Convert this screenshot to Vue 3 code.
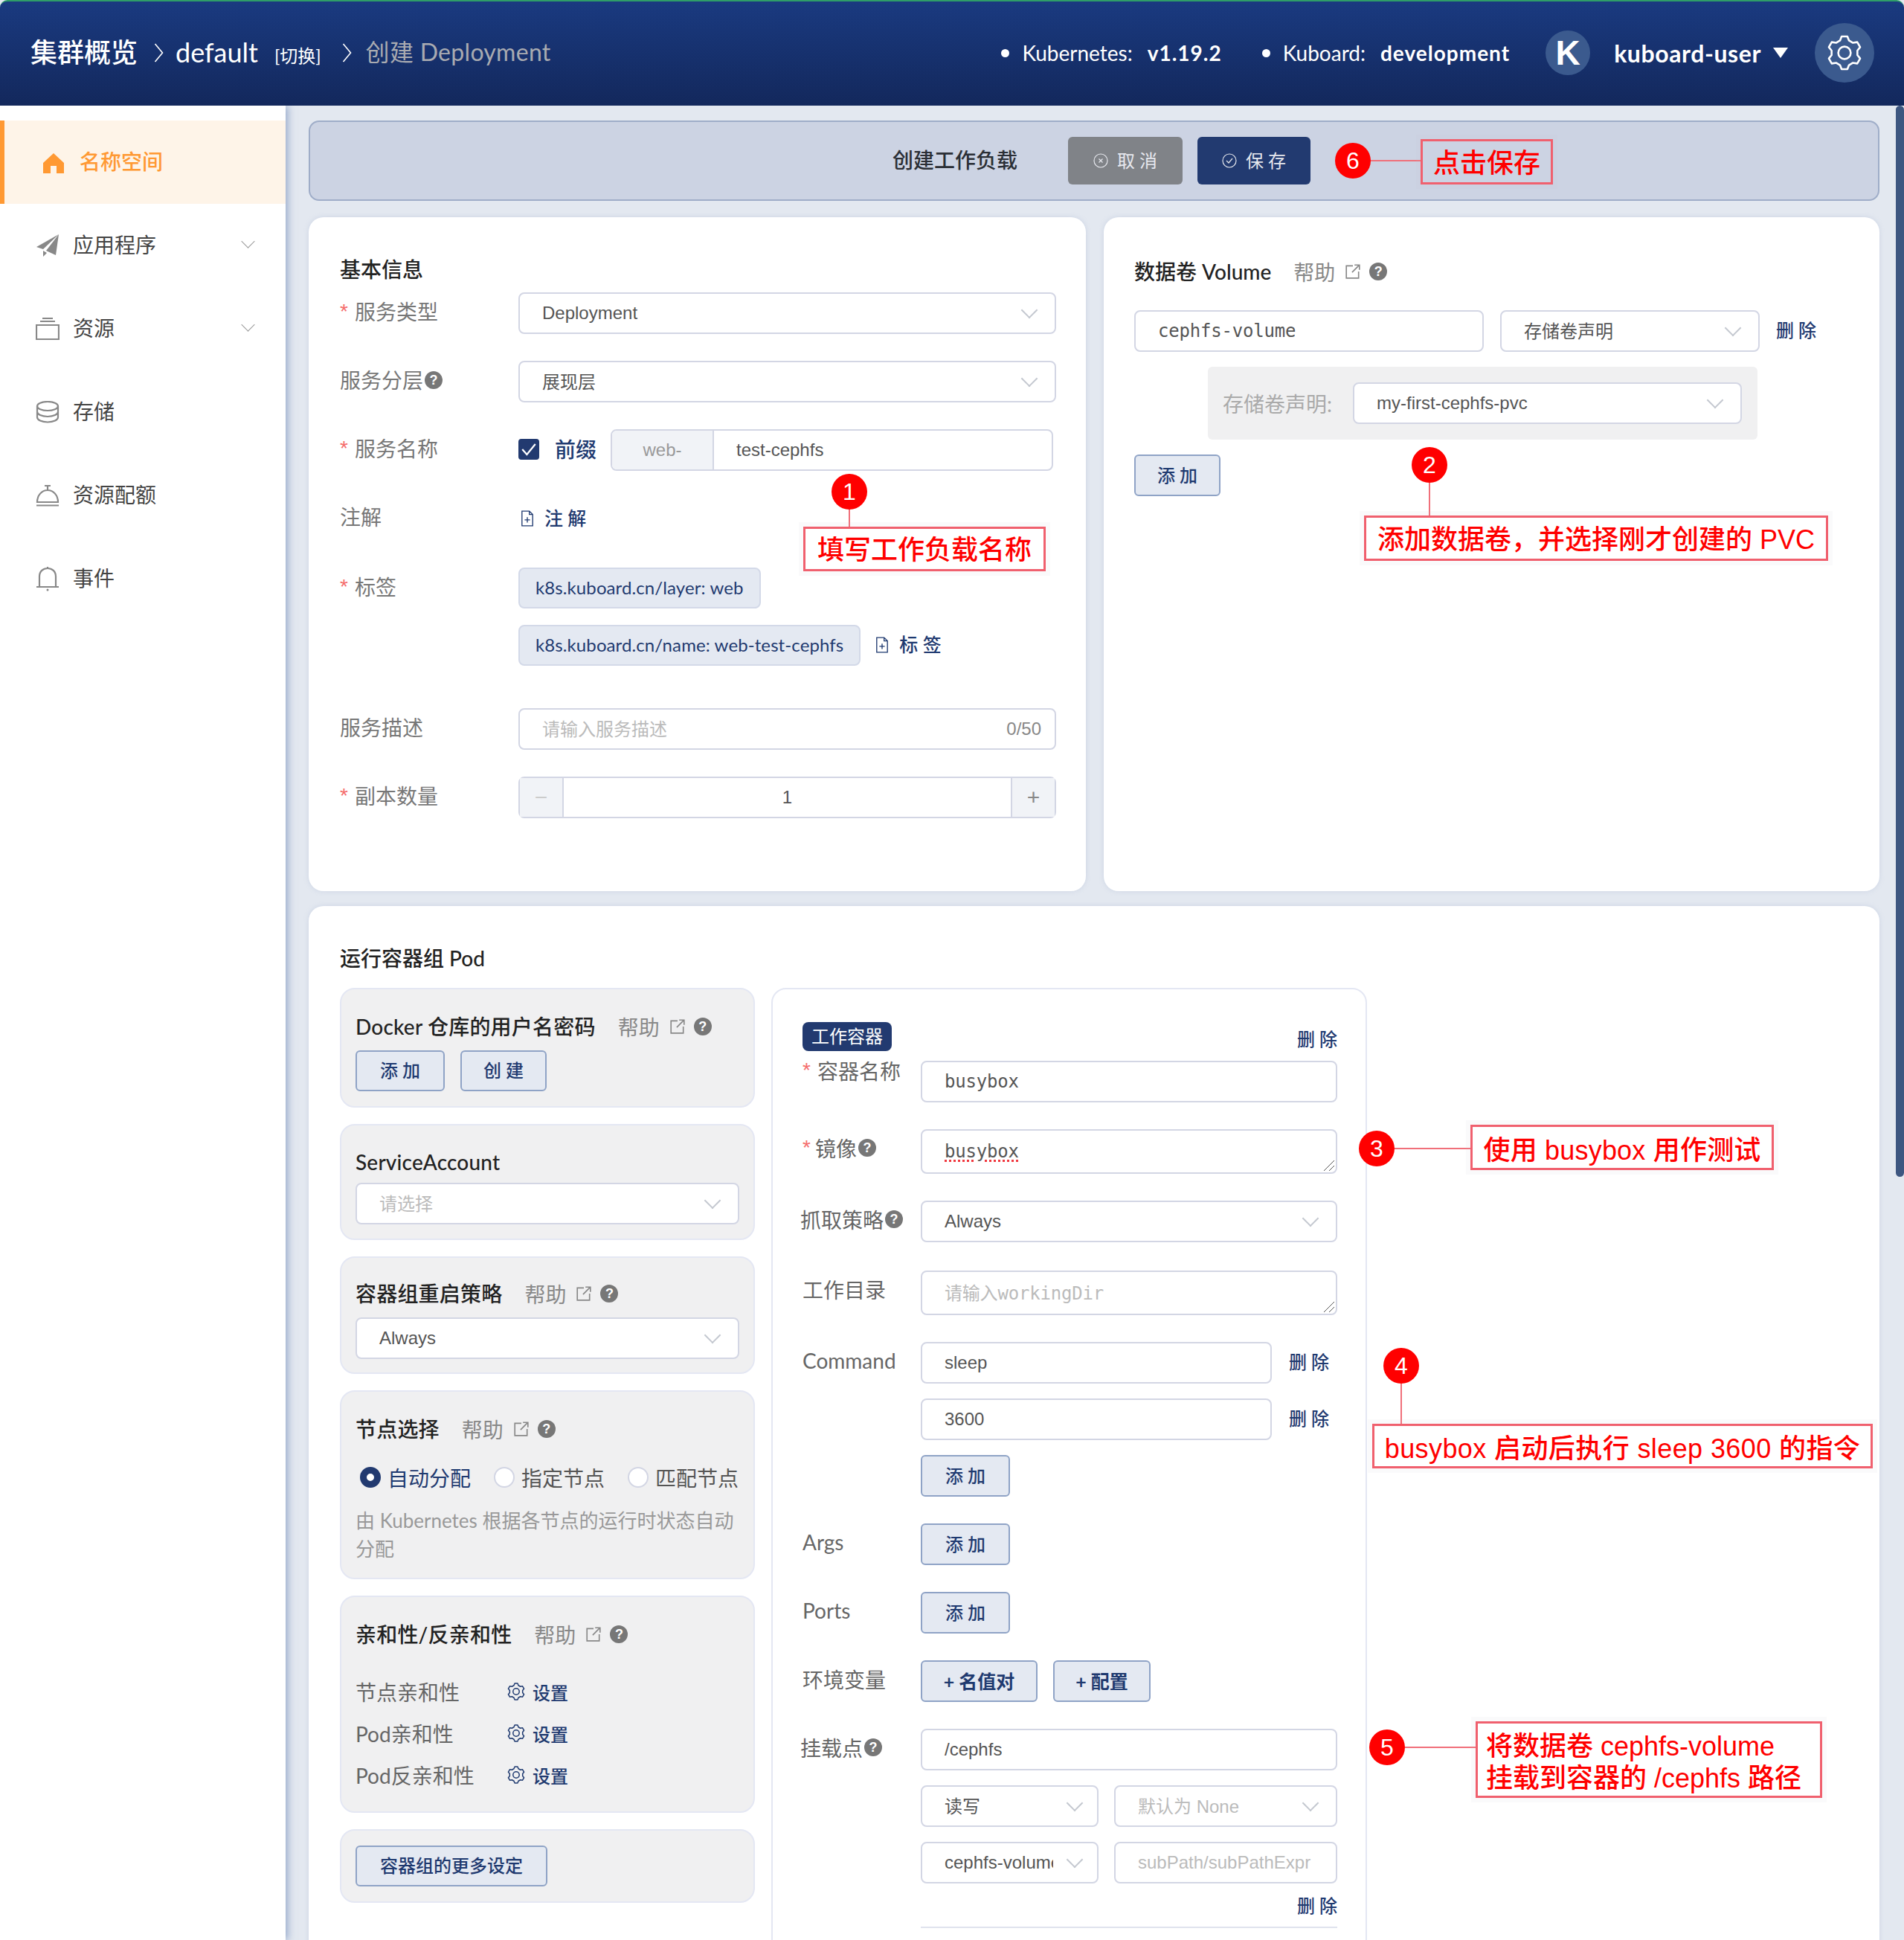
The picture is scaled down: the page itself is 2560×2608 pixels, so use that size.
<template>
  <div class="page">
    <header class="topbar">
      <span class="crumb strong">集群概览</span>
      <svg class="crumb-sep first" viewBox="0 0 12 26"><path d="M1 1l10 12L1 25" /></svg>
      <span class="crumb">default</span>
      <span class="switch">[切换]</span>
      <svg class="crumb-sep second" viewBox="0 0 12 26"><path d="M1 1l10 12L1 25" /></svg>
      <span class="crumb muted">创建 Deployment</span>

      <div class="top-right">
        <span class="meta"><i class="dot"></i>Kubernetes:<b>v1.19.2</b></span>
        <span class="meta second"><i class="dot"></i>Kuboard:<b>development</b></span>
        <span class="avatar">K</span>
        <span class="username">kuboard-user</span>
        <span class="caret"></span>
        <span class="gear-btn">
          <svg class="gear" viewBox="0 0 24 24"><path :d="gearPath" /><circle cx="12" cy="12" r="4.2" /></svg>
        </span>
      </div>
    </header>

    <div class="layout">
      <aside class="sidebar">
        <div class="menu-item active">
          <svg class="menu-icon home" viewBox="0 0 28 27"><path d="M14 0l14 13v14H18V17h-8v10H0V13z" /></svg>
          <span class="menu-text">名称空间</span>
        </div>
        <div class="menu-item">
          <svg class="menu-icon solid" viewBox="0 0 32 30"><path d="M31 0L1 17l9 3zM31 0L14 22l13 6zM10 22v8l5-5z" /></svg>
          <span class="menu-text">应用程序</span>
          <i class="menu-arrow"></i>
        </div>
        <div class="menu-item">
          <svg class="menu-icon" viewBox="0 0 32 30"><path d="M1 10h30v19H1zM6 5h20M9 1h14" /></svg>
          <span class="menu-text">资源</span>
          <i class="menu-arrow"></i>
        </div>
        <div class="menu-item">
          <svg class="menu-icon" viewBox="0 0 32 30"><ellipse cx="16" cy="7" rx="14" ry="6" /><path d="M2 7v15c0 3.5 6 6.500 14 6.500s14-3 14-6.500V7M2 14.500c0 3.500 6 6.500 14 6.500s14-3 14-6.500" /></svg>
          <span class="menu-text">存储</span>
        </div>
        <div class="menu-item">
          <svg class="menu-icon" viewBox="0 0 32 30"><path d="M2 24C2 15 8 8 16 8s14 7 14 16zM1 28.500h30M16 8V3M12 2h8" /></svg>
          <span class="menu-text">资源配额</span>
        </div>
        <div class="menu-item">
          <svg class="menu-icon tall" viewBox="0 0 32 34"><path d="M5 27V14C5 7 10 3 16 3s11 4 11 11v13M1 28h30M16 3V1" /><circle class="bell-dot" cx="16" cy="32" r="1.500" /></svg>
          <span class="menu-text">事件</span>
        </div>
      </aside>

      <main class="main">
        <div class="toolbar">
          <span class="toolbar-title">创建工作负载</span>
          <span class="tool-btn cancel">
            <svg class="tool-icon" viewBox="0 0 20 20"><circle cx="10" cy="10" r="9" /><path d="M7.500 7.500l5 5M12.500 7.500l-5 5" /></svg>
            <span class="lift">取 消</span>
          </span>
          <span class="tool-btn save">
            <svg class="tool-icon" viewBox="0 0 20 20"><circle cx="10" cy="10" r="9" /><path d="M6 10l3 3 5-6" /></svg>
            <span class="lift">保 存</span>
          </span>
        </div>

        <div class="cards">
          <section class="card basic">
            <h3 class="card-title">基本信息</h3>
            <div class="row">
              <label class="row-label"><i class="req">*</i>服务类型</label>
              <div class="select grow"><span>Deployment</span></div>
            </div>
            <div class="row">
              <label class="row-label">服务分层<i class="help">?</i></label>
              <div class="select grow"><span class="lift">展现层</span></div>
            </div>
            <div class="row">
              <label class="row-label"><i class="req">*</i>服务名称</label>
              <span class="check">
                <svg viewBox="0 0 16 16"><path d="M3 8l3.500 4L13 4" /></svg>
              </span>
              <span class="prefix-text">前缀</span>
              <div class="input-group">
                <span class="group-prefix">web-</span>
                <span class="group-value">test-cephfs</span>
              </div>
            </div>
            <div class="row">
              <label class="row-label">注解</label>
              <span class="link-add">
                <svg class="doc" viewBox="0 0 20 24"><path d="M2 1h11l5 5v17H2zM13 1v5h5M10 10v8M6 14h8" /></svg>
                <span class="lift">注 解</span>
              </span>
            </div>
            <div class="row tag-row">
              <label class="row-label"><i class="req">*</i>标签</label>
              <div class="tags">
                <span class="tag">k8s.kuboard.cn/layer: web</span>
                <div class="tag-line">
                  <span class="tag">k8s.kuboard.cn/name: web-test-cephfs</span>
                  <span class="link-add">
                    <svg class="doc" viewBox="0 0 20 24"><path d="M2 1h11l5 5v17H2zM13 1v5h5M10 10v8M6 14h8" /></svg>
                    <span class="lift">标 签</span>
                  </span>
                </div>
              </div>
            </div>
            <div class="row">
              <label class="row-label">服务描述</label>
              <div class="input grow between">
                <span class="placeholder lift">请输入服务描述</span>
                <span class="counter">0/50</span>
              </div>
            </div>
            <div class="row">
              <label class="row-label"><i class="req">*</i>副本数量</label>
              <div class="stepper">
                <span class="step minus">−</span>
                <span class="step-value">1</span>
                <span class="step plus">+</span>
              </div>
            </div>
          </section>

          <section class="card volume">
            <div class="head-line volume-head">
              <h3 class="card-title">数据卷 Volume</h3>
              <span class="help-text">帮助</span>
              <svg class="ext" viewBox="0 0 20 20"><path d="M10 3H2v15h15v-8M9 11l9-9M12 2h6v6" /></svg>
              <i class="help">?</i>
            </div>
            <div class="volume-line">
              <div class="input mono volume-name">cephfs-volume</div>
              <div class="select volume-type"><span class="lift">存储卷声明</span></div>
              <span class="del">删 除</span>
            </div>
            <div class="volume-box">
              <label class="volume-label">存储卷声明:</label>
              <div class="select grow"><span>my-first-cephfs-pvc</span></div>
            </div>
            <span class="btn narrow">添 加</span>
          </section>
        </div>

        <section class="card pod">
          <h3 class="card-title pod-title">运行容器组 Pod</h3>
          <div class="pod-cols">
            <div class="pod-left">
              <div class="panel">
                <div class="head-line">
                  <h4 class="panel-title">Docker 仓库的用户名密码</h4>
                  <span class="help-text">帮助</span>
                  <svg class="ext" viewBox="0 0 20 20"><path d="M10 3H2v15h15v-8M9 11l9-9M12 2h6v6" /></svg>
                  <i class="help">?</i>
                </div>
                <div class="btn-line">
                  <span class="btn small">添 加</span>
                  <span class="btn small narrow">创 建</span>
                </div>
              </div>

              <div class="panel sa">
                <h4 class="panel-title">ServiceAccount</h4>
                <div class="select"><span class="placeholder lift">请选择</span></div>
              </div>

              <div class="panel restart">
                <div class="head-line">
                  <h4 class="panel-title">容器组重启策略</h4>
                  <span class="help-text">帮助</span>
                  <svg class="ext" viewBox="0 0 20 20"><path d="M10 3H2v15h15v-8M9 11l9-9M12 2h6v6" /></svg>
                  <i class="help">?</i>
                </div>
                <div class="select"><span>Always</span></div>
              </div>

              <div class="panel">
                <div class="head-line">
                  <h4 class="panel-title">节点选择</h4>
                  <span class="help-text">帮助</span>
                  <svg class="ext" viewBox="0 0 20 20"><path d="M10 3H2v15h15v-8M9 11l9-9M12 2h6v6" /></svg>
                  <i class="help">?</i>
                </div>
                <div class="radios">
                  <span class="radio on"><i></i>自动分配</span>
                  <span class="radio"><i></i>指定节点</span>
                  <span class="radio"><i></i>匹配节点</span>
                </div>
                <p class="hint">由 Kubernetes 根据各节点的运行时状态自动<br />分配</p>
              </div>

              <div class="panel">
                <div class="head-line">
                  <h4 class="panel-title">亲和性/反亲和性</h4>
                  <span class="help-text">帮助</span>
                  <svg class="ext" viewBox="0 0 20 20"><path d="M10 3H2v15h15v-8M9 11l9-9M12 2h6v6" /></svg>
                  <i class="help">?</i>
                </div>
                <div class="affinity">
                  <div v-for="name in affinities" :key="name" class="affinity-row">
                    <span class="affinity-name">{{ name }}</span>
                    <span class="setting">
                      <svg class="cog" viewBox="0 0 24 24"><path :d="gearPath" /><circle cx="12" cy="12" r="4.200" /></svg>
                      设置
                    </span>
                  </div>
                </div>
              </div>

              <div class="panel more">
                <span class="btn small">容器组的更多设定</span>
              </div>
            </div>

            <div class="container-box">
              <div class="box-head">
                <span class="kind">工作容器</span>
                <span class="del flat">删 除</span>
              </div>

              <div class="c-row name-row">
                <label class="c-label"><i class="req">*</i>容器名称</label>
                <div class="input mono grow">busybox</div>
              </div>
              <div class="c-row">
                <label class="c-label"><i class="req tight">*</i>镜像<i class="help">?</i></label>
                <div class="input area mono grow"><span class="typo">busybox</span>
                  <svg class="resize" viewBox="0 0 16 16"><path d="M15 1L1 15M15 8l-7 7" /></svg>
                </div>
              </div>
              <div class="c-row">
                <label class="c-label shift">抓取策略<i class="help">?</i></label>
                <div class="select grow"><span>Always</span></div>
              </div>
              <div class="c-row workdir">
                <label class="c-label">工作目录</label>
                <div class="input area mono grow"><span class="placeholder lift">请输入workingDir</span>
                  <svg class="resize" viewBox="0 0 16 16"><path d="M15 1L1 15M15 8l-7 7" /></svg>
                </div>
              </div>
              <div class="c-row">
                <label class="c-label">Command</label>
                <div class="stack grow">
                  <div v-for="arg in command" :key="arg" class="cmd-line">
                    <div class="input cmd-input">{{ arg }}</div>
                    <span class="del">删 除</span>
                  </div>
                  <div><span class="btn">添 加</span></div>
                </div>
              </div>
              <div class="c-row">
                <label class="c-label">Args</label>
                <span class="btn">添 加</span>
              </div>
              <div class="c-row">
                <label class="c-label">Ports</label>
                <span class="btn">添 加</span>
              </div>
              <div class="c-row">
                <label class="c-label">环境变量</label>
                <div class="btn-line">
                  <span class="btn bold env-kv">+ 名值对</span>
                  <span class="btn bold env-cfg">+ 配置</span>
                </div>
              </div>
              <div class="c-row">
                <label class="c-label shift">挂载点<i class="help">?</i></label>
                <div class="stack grow">
                  <div class="input">/cephfs</div>
                  <div class="mount-line">
                    <div class="select mount-left"><span class="lift">读写</span></div>
                    <div class="select grow"><span class="placeholder lift">默认为 None</span></div>
                  </div>
                  <div class="mount-line">
                    <div class="select mount-left"><span class="clip">cephfs-volume</span></div>
                    <div class="input grow"><span class="placeholder">subPath/subPathExpr</span></div>
                  </div>
                  <div class="mount-del"><span class="del flat">删 除</span></div>
                </div>
              </div>
            </div>
          </div>
        </section>
      </main>
    </div>

    <!-- 截图上的红色标注 -->
    <div class="scrollbar"></div>
    <div class="note-line h l6"></div>
    <span class="badge b6">6</span>
    <div class="note n6">点击保存</div>
    <div class="note-line v l1"></div>
    <span class="badge b1">1</span>
    <div class="note n1">填写工作负载名称</div>
    <div class="note-line v l2"></div>
    <span class="badge b2">2</span>
    <div class="note n2">添加数据卷，并选择刚才创建的 PVC</div>
    <div class="note-line h l3"></div>
    <span class="badge b3">3</span>
    <div class="note n3">使用 busybox 用作测试</div>
    <div class="note-line v l4"></div>
    <span class="badge b4">4</span>
    <div class="note n4">busybox 启动后执行 sleep 3600 的指令</div>
    <div class="note-line h l5"></div>
    <span class="badge b5">5</span>
    <div class="note n5">将数据卷 cephfs-volume<br />挂载到容器的 /cephfs 路径</div>
  </div>
</template>

<script setup>
const affinities = ['节点亲和性', 'Pod亲和性', 'Pod反亲和性']
const command = ['sleep', '3600']

// six tooth cog, same shape in the header and the settings links
const point = (r, deg) => {
  const a = (deg * Math.PI) / 180
  return `${(12 + r * Math.cos(a)).toFixed(2)} ${(12 + r * Math.sin(a)).toFixed(2)}`
}
const gearPath = [0, 1, 2, 3, 4, 5]
  .map((i) => {
    const c = -90 + i * 60
    return `${i ? 'L' : 'M'}${point(8.8, c - 20)}L${point(11.2, c - 10)}L${point(11.2, c + 10)}L${point(8.8, c + 20)}`
  })
  .join('') + 'Z'
</script>

<style>
html,
body {
  margin: 0;
  background: #e3e8f0;
}
</style>

<style scoped>
.page {
  position: relative;
  width: 2560px;
  height: 2608px;
  overflow: hidden;
  background: #e3e8f0;
  font-family: Lato, "Noto Sans CJK SC", sans-serif;
  font-size: 28px;
  color: #555;
}

h3, h4, p {
  margin: 0;
  font-weight: 500;
}

i {
  font-style: normal;
}

/* the CJK fallback sits a little low next to the latin fonts */
.lift {
  margin-bottom: 4px;
}

/* header */
.topbar {
  position: relative;
  z-index: 2;
  box-sizing: border-box;
  height: 142px;
  display: flex;
  align-items: center;
  padding: 0 40px 2px 41px;
  border-top: 2px solid #2f9e68;
  border-radius: 10px 10px 0 0;
  background: linear-gradient(#1a3a80, #13285c);
  color: #fff;
}
.crumb {
  margin-bottom: 3px;
  font-size: 36px;
  line-height: 50px;
}
.crumb.strong {
  font-weight: 500;
}
.crumb.muted {
  color: #a9abb1;
  font-size: 32px;
  letter-spacing: 0.3px;
}
.crumb-sep {
  width: 13px;
  height: 26px;
  margin: 0 22px;
  fill: none;
  stroke: #fff;
  stroke-width: 1.6;
}
.crumb-sep.first {
  margin-right: 16px;
}
.crumb-sep.second {
  margin: 0 19px 0 20px;
}
.switch {
  margin: 4px 8px 0 22px;
  font-size: 24px;
}
.top-right {
  margin-left: auto;
  display: flex;
  align-items: center;
}
.meta {
  display: flex;
  align-items: center;
  font-size: 28px;
}
.meta b {
  margin-left: 20px;
  font-weight: 700;
  letter-spacing: 1px;
}
.meta.second {
  margin-left: 54px;
}
.dot {
  width: 11px;
  height: 11px;
  margin-right: 17px;
  border-radius: 50%;
  background: #fff;
}
.avatar {
  width: 60px;
  height: 60px;
  margin-left: 48px;
  border-radius: 50%;
  background: #3b5a8e;
  font-family: "Liberation Sans", sans-serif;
  font-size: 46px;
  font-weight: 700;
  line-height: 60px;
  text-align: center;
}
.username {
  margin-left: 32px;
  font-size: 32px;
  font-weight: 700;
  letter-spacing: 0.6px;
}
.caret {
  width: 0;
  height: 0;
  margin-left: 16px;
  border-left: 10px solid transparent;
  border-right: 10px solid transparent;
  border-top: 14px solid #fff;
}
.gear-btn {
  width: 80px;
  height: 80px;
  margin-left: 36px;
  display: flex;
  align-items: center;
  justify-content: center;
  border-radius: 50%;
  background: #3b5a8e;
}
.gear {
  width: 48px;
  height: 48px;
  fill: none;
  stroke: #fff;
  stroke-width: 1.300;
  stroke-linejoin: round;
}

/* sidebar */
.layout {
  display: flex;
  height: 2466px;
}
.sidebar {
  position: relative;
  z-index: 1;
  flex: none;
  width: 384px;
  padding-top: 20px;
  background: #fff;
  box-shadow: 3px 0 10px rgba(90, 120, 175, 0.55);
}
.menu-item {
  position: relative;
  box-sizing: border-box;
  height: 112px;
  padding-left: 48px;
  display: flex;
  align-items: center;
  color: #444;
}
.menu-text {
  margin-bottom: 4px;
}
.menu-item.active {
  padding-left: 8px;
  margin-bottom: 0;
  border-left: 6px solid #ff9933;
  background: #fef4e8;
  color: #ff9933;
  font-weight: 500;
}
.menu-icon {
  flex: none;
  width: 32px;
  height: 30px;
  margin-right: 18px;
  fill: none;
  stroke: #888;
  stroke-width: 2.200;
}
.menu-icon.solid {
  fill: #888;
  stroke: none;
}
.menu-icon.tall {
  height: 34px;
}
.bell-dot {
  fill: #888;
  stroke: none;
}
.menu-icon.home {
  width: 28px;
  height: 27px;
  margin: 2px 21px 0 44px;
  fill: #ff9933;
  stroke: none;
}
.menu-arrow {
  position: absolute;
  right: 44px;
  top: 44px;
  width: 12px;
  height: 12px;
  border-right: 1.500px solid #999;
  border-bottom: 1.500px solid #999;
  transform: rotate(45deg);
}

/* main column */
.main {
  flex: 1;
  min-width: 0;
  padding: 20px 33px 0 31px;
}
.toolbar {
  box-sizing: border-box;
  height: 108px;
  margin-bottom: 22px;
  padding-left: 783px;
  display: flex;
  align-items: center;
  border: 2px solid #9fadc8;
  border-radius: 14px;
  background: #ccd3e3;
}
.toolbar-title {
  margin: 0 68px 4px 0;
  color: #2b2f36;
  font-weight: 500;
}
.tool-btn {
  box-sizing: border-box;
  height: 64px;
  display: flex;
  align-items: center;
  justify-content: center;
  border-radius: 6px;
  color: #e6e8ee;
  font-size: 24px;
}
.tool-btn.cancel {
  width: 154px;
  margin-right: 20px;
  background: #808388;
}
.tool-btn.save {
  width: 152px;
  background: #223a70;
}
.tool-icon {
  width: 20px;
  height: 20px;
  margin-right: 12px;
  fill: none;
  stroke: currentColor;
  stroke-width: 1.200;
}

.cards {
  display: flex;
  gap: 24px;
}
.card {
  box-sizing: border-box;
  border-radius: 20px;
  background: #fff;
  box-shadow: 0 0 6px rgba(160, 175, 205, 0.35);
}
.card-title {
  color: #222;
  font-size: 28px;
  line-height: 40px;
}
.basic {
  width: 1045px;
  height: 906px;
  padding: 50px 40px 0 42px;
}
.basic .card-title {
  margin-bottom: 11px;
}
.volume {
  width: 1043px;
  padding: 50px 0 0 41px;
}

/* form rows */
.row {
  display: flex;
  align-items: flex-start;
  min-height: 56px;
  margin-bottom: 36px;
}
.row-label {
  flex: none;
  width: 240px;
  display: flex;
  align-items: center;
  color: #777;
  line-height: 52px;
}
.req {
  margin-right: 9px;
  color: #f56c6c;
  font-family: "Liberation Sans", sans-serif;
}
.req.tight {
  margin-right: 6px;
}
.help {
  flex: none;
  display: inline-block;
  width: 24px;
  height: 24px;
  margin-left: 2px;
  border-radius: 50%;
  background: #777;
  color: #fff;
  font-family: "Liberation Sans", sans-serif;
  font-size: 18px;
  font-weight: 700;
  line-height: 24px;
  text-align: center;
}
.grow {
  flex: 1;
  min-width: 0;
}
.input,
.select {
  box-sizing: border-box;
  height: 56px;
  padding: 0 30px;
  display: flex;
  align-items: center;
  border: 2px solid #d3d6e4;
  border-radius: 8px;
  background: #fff;
  color: #555;
  font-family: "Liberation Sans", "Noto Sans CJK SC", sans-serif;
  font-size: 24px;
}
.select {
  justify-content: space-between;
  padding-right: 26px;
}
.select::after {
  content: '';
  flex: none;
  width: 14px;
  height: 14px;
  margin-top: -8px;
  border-right: 2px solid #c4c8d0;
  border-bottom: 2px solid #c4c8d0;
  transform: rotate(45deg);
}
.between {
  justify-content: space-between;
  padding-right: 18px;
}
.placeholder {
  color: #bbb;
}
.counter {
  color: #888;
}
.mono {
  font-family: "DejaVu Sans Mono", "Noto Sans CJK SC", monospace;
  font-size: 24px;
  letter-spacing: -0.2px;
}
.check {
  flex: none;
  width: 28px;
  height: 28px;
  margin-top: 13px;
  border-radius: 4px;
  background: #223a70;
}
.check svg {
  display: block;
  width: 28px;
  height: 28px;
  fill: none;
  stroke: #fff;
  stroke-width: 1.300;
}
.prefix-text {
  width: 75px;
  margin-left: 21px;
  color: #1f3a70;
  font-weight: 500;
  line-height: 54px;
}
.input-group {
  box-sizing: border-box;
  width: 595px;
  height: 56px;
  display: flex;
  border: 2px solid #d3d6e4;
  border-radius: 8px;
  font-family: "Liberation Sans", sans-serif;
  font-size: 24px;
  line-height: 52px;
}
.group-prefix {
  width: 135px;
  border-right: 2px solid #d3d6e4;
  border-radius: 6px 0 0 6px;
  background: #f1f3f7;
  color: #999;
  text-align: center;
}
.group-value {
  padding-left: 30px;
}
.link-add {
  display: flex;
  align-items: center;
  height: 56px;
  padding-left: 3px;
  color: #1f3a70;
  font-size: 25px;
  font-weight: 500;
}
.doc {
  width: 18px;
  height: 22px;
  margin-right: 14px;
  fill: none;
  stroke: #1f3a70;
  stroke-width: 1.500;
}
.tag-row {
  padding-top: 2px;
  margin-bottom: 57px;
}
.tags {
  display: flex;
  flex-direction: column;
  align-items: flex-start;
  gap: 21px;
}
.tag {
  box-sizing: border-box;
  height: 55px;
  padding: 0 21px;
  border: 2px solid #d3d9e8;
  border-radius: 8px;
  background: #e4e9f2;
  color: #1f3a70;
  font-size: 24px;
  letter-spacing: 0.1px;
  line-height: 50px;
}
.tag-line {
  display: flex;
  align-items: center;
  gap: 17px;
}
.stepper {
  flex: 1;
  box-sizing: border-box;
  height: 56px;
  display: flex;
  border: 2px solid #d3d6e4;
  border-radius: 8px;
  font-family: "Liberation Sans", sans-serif;
  font-size: 24px;
  line-height: 52px;
  text-align: center;
}
.step {
  flex: none;
  width: 57px;
  background: #f1f3f7;
  color: #888;
  font-size: 30px;
}
.step.minus {
  border-right: 2px solid #d3d6e4;
  color: #ccc;
}
.step.plus {
  border-left: 2px solid #d3d6e4;
}
.step-value {
  flex: 1;
}

/* volume card */
.head-line {
  display: flex;
  align-items: center;
  height: 40px;
}
.volume-head {
  margin: 3px 0 32px;
}
.help-text {
  margin-left: 30px;
  color: #888;
}
.ext {
  flex: none;
  width: 22px;
  height: 22px;
  margin: 0 9px 0 13px;
  fill: none;
  stroke: #888;
  stroke-width: 1.500;
}
.volume-line {
  display: flex;
  align-items: center;
  margin-bottom: 20px;
}
.volume-name {
  width: 470px;
}
.volume-type {
  width: 349px;
  margin: 0 22px;
}
.del {
  margin-bottom: 6px;
  color: #1f3a70;
  font-size: 24px;
  font-weight: 500;
}
.del.flat {
  margin-bottom: 0;
}
.volume-box {
  box-sizing: border-box;
  width: 739px;
  height: 98px;
  margin: 0 0 20px 99px;
  padding: 0 21px 0 20px;
  display: flex;
  align-items: center;
  border-radius: 6px;
  background: #f0f0f1;
}
.volume-label {
  width: 175px;
  color: #aaa;
}
.btn {
  box-sizing: border-box;
  display: inline-block;
  height: 56px;
  padding: 0 31px;
  border: 2px solid #8fa3c6;
  border-radius: 6px;
  background: #e4e9f2;
  color: #1f3a70;
  font-size: 24px;
  font-weight: 500;
  line-height: 52px;
  white-space: nowrap;
}
.btn.small {
  height: 55px;
  line-height: 50px;
}
.btn.narrow {
  padding: 0 29px;
}
.btn.bold {
  padding: 0;
  font-size: 25px;
  font-weight: 700;
  text-align: center;
}
.env-kv {
  width: 157px;
}
.env-cfg {
  width: 131px;
}

/* pod card */
.pod {
  height: 1500px;
  margin-top: 20px;
  padding: 50px 40px 0 42px;
}
.pod-title {
  margin-bottom: 20px;
}
.pod-cols {
  display: flex;
  align-items: flex-start;
  gap: 22px;
}
.pod-left {
  flex: none;
  width: 558px;
  display: flex;
  flex-direction: column;
  gap: 22px;
}
.panel {
  box-sizing: border-box;
  padding: 30px 19px 20px;
  border: 2px solid #e4e7f3;
  border-radius: 20px;
  background: #f0f0f1;
}
.panel.sa {
  padding: 29px 19px 19px;
}
.panel.restart {
  padding: 28px 19px 18px;
}
.panel.more {
  padding-top: 20px;
}
.panel-title {
  color: #222;
  font-size: 28px;
  letter-spacing: 0.2px;
  line-height: 40px;
}
.panel > .head-line {
  margin-bottom: 12px;
}
.panel > .panel-title {
  margin-bottom: 8px;
}
.btn-line {
  display: flex;
  gap: 21px;
}
.radios {
  display: flex;
  align-items: center;
  height: 40px;
  margin: 25px 0 19px 6px;
  gap: 31px;
  color: #555;
  white-space: nowrap;
}
.radio {
  flex: none;
  display: flex;
  align-items: center;
}
.radio i {
  flex: none;
  box-sizing: border-box;
  width: 28px;
  height: 28px;
  margin-right: 9px;
  border: 2px solid #d3d6e4;
  border-radius: 50%;
  background: #fff;
}
.radio.on {
  color: #1f3a70;
}
.radio.on i {
  border: 9px solid #223a70;
}
.hint {
  color: #999;
  font-size: 26px;
  font-weight: 400;
  line-height: 38px;
}
.affinity {
  margin: 29px 0 1px;
}
.affinity-row {
  display: flex;
  align-items: center;
  height: 56px;
}
.affinity-name {
  width: 204px;
  color: #666;
}
.setting {
  display: flex;
  align-items: center;
  color: #1f3a70;
  font-size: 24px;
  font-weight: 500;
}
.cog {
  width: 24px;
  height: 24px;
  margin-right: 10px;
  fill: none;
  stroke: #1f3a70;
  stroke-width: 1.500;
  stroke-linejoin: round;
}

/* container form */
.container-box {
  flex: none;
  box-sizing: border-box;
  width: 801px;
  height: 1400px;
  padding: 44px 38px 0 40px;
  border: 2px solid #e4e7f3;
  border-radius: 20px;
}
.box-head {
  display: flex;
  justify-content: space-between;
  align-items: flex-end;
  height: 39px;
  margin-bottom: 13px;
}
.kind {
  width: 120px;
  height: 39px;
  border-radius: 8px;
  background: #223a70;
  color: #fff;
  font-size: 24px;
  line-height: 37px;
  text-align: center;
}
.c-row {
  display: flex;
  align-items: flex-start;
  margin-bottom: 36px;
}
.c-row.workdir {
  margin-top: 38px;
}
.c-label {
  flex: none;
  width: 159px;
  height: 50px;
  display: flex;
  align-items: center;
  color: #666;
  white-space: nowrap;
}
.name-row .c-label {
  margin-top: -12px;
}
.c-label.shift {
  margin-left: -3px;
  margin-right: 3px;
}
.input.area {
  position: relative;
  height: 60px;
}
.typo {
  text-decoration: underline dotted #f0383f 3px;
  text-underline-offset: 3px;
}
.resize {
  position: absolute;
  right: 1px;
  bottom: 1px;
  width: 16px;
  height: 16px;
  fill: none;
  stroke: #555;
  stroke-width: 1;
}
.stack {
  display: flex;
  flex-direction: column;
  gap: 20px;
}
.cmd-line {
  display: flex;
  align-items: center;
}
.cmd-input {
  width: 472px;
  margin-right: 23px;
}
.mount-line {
  display: flex;
  gap: 21px;
}
.mount-left {
  flex: none;
  width: 239px;
  padding-right: 22px;
}
.clip {
  width: 146px;
  overflow: hidden;
  white-space: nowrap;
}
.mount-del {
  margin-top: -9px;
  padding-bottom: 11px;
  border-bottom: 2px solid #e0e3ee;
  line-height: 34px;
  text-align: right;
}

/* annotations drawn over the screenshot */
.scrollbar {
  position: absolute;
  right: 0;
  top: 142px;
  width: 11px;
  height: 1440px;
  border-radius: 6px;
  background: #3d5680;
}
.badge {
  position: absolute;
  width: 48px;
  height: 48px;
  border-radius: 50%;
  background: #f00;
  color: #fff;
  font-family: "Liberation Sans", sans-serif;
  font-size: 32px;
  line-height: 48px;
  text-align: center;
}
.note {
  position: absolute;
  box-sizing: border-box;
  display: flex;
  align-items: center;
  justify-content: center;
  border: 3px solid #f0606e;
  box-shadow: 0 0 0 6px rgba(190, 195, 210, 0.08);
  color: #f00;
  font-family: "Liberation Sans", "Noto Sans CJK SC", sans-serif;
  font-size: 36px;
  font-weight: 500;
  white-space: nowrap;
}
.note-line {
  position: absolute;
  background: #f0707a;
}
.note-line.h {
  height: 2px;
}
.note-line.v {
  width: 2px;
}
.b6 { left: 1795px; top: 192px; }
.l6 { left: 1843px; top: 215px; width: 67px; }
.n6 { left: 1910px; top: 187px; width: 178px; height: 61px; padding-bottom: 4px; }
.b1 { left: 1118px; top: 637px; }
.l1 { left: 1141px; top: 685px; height: 23px; }
.n1 { left: 1080px; top: 708px; width: 326px; height: 60px; padding-bottom: 4px; background: #fff; }
.b2 { left: 1898px; top: 601px; }
.l2 { left: 1921px; top: 649px; height: 44px; }
.n2 { left: 1834px; top: 693px; width: 624px; height: 61px; padding-bottom: 4px; background: #fff; }
.b3 { left: 1827px; top: 1520px; }
.l3 { left: 1875px; top: 1543px; width: 102px; }
.n3 { left: 1977px; top: 1512px; width: 408px; height: 61px; background: #fff; letter-spacing: 0.2px; }
.b4 { left: 1860px; top: 1812px; }
.l4 { left: 1883px; top: 1860px; height: 54px; }
.n4 { left: 1845px; top: 1914px; width: 673px; height: 60px; background: #fff; letter-spacing: 0.4px; }
.b5 { left: 1841px; top: 2325px; }
.l5 { left: 1889px; top: 2348px; width: 95px; }
.n5 {
  left: 1984px;
  top: 2314px;
  width: 466px;
  height: 103px;
  padding: 6px 0 0 11px;
  justify-content: flex-start;
  background: #fff;
  line-height: 43px;
}
</style>
